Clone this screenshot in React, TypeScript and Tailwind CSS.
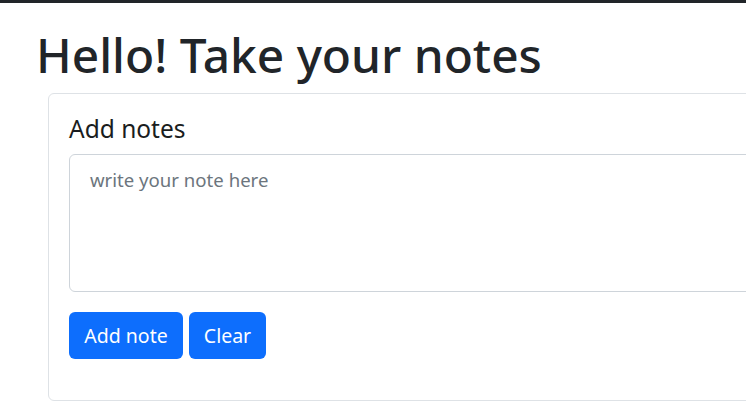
import React from "react";

export default function App() {
  return (
    <div
      className="w-[746px] h-[417px] overflow-hidden bg-white text-[#212529]"
      style={{ fontFamily: '"Noto Sans", "Open Sans", sans-serif' }}
    >
      <div className="h-[3px] bg-[#212529]" />
      <div className="w-[1100px]">
        <h1 className="ml-[36px] mt-[22px] text-[47.8px] leading-[60px] font-medium">
          Hello! Take your notes
        </h1>
        <div className="ml-[48px] mt-[8px] rounded-[6px] border border-[#dee2e6] p-[20px] pb-[41px]">
          <h5 className="text-[24.5px] leading-[30px] font-normal text-[#1a1d20] mb-[10px]">Add notes</h5>
          <textarea
            rows={4}
            placeholder="write your note here"
            className="block w-full h-[138px] resize-none rounded-[6px] border border-[#ced4da] px-[20px] py-[10px] text-[18.6px] leading-[30px] placeholder:text-[#6c757d] outline-none"
          />
          <div className="mt-[20px] flex gap-[6px]">
            <button className="h-[47px] w-[114px] rounded-[6px] bg-[#0d6efd] text-white text-[19.5px]">
              Add note
            </button>
            <button className="h-[47px] w-[77px] rounded-[6px] bg-[#0d6efd] text-white text-[19.5px]">
              Clear
            </button>
          </div>
        </div>
      </div>
    </div>
  );
}
